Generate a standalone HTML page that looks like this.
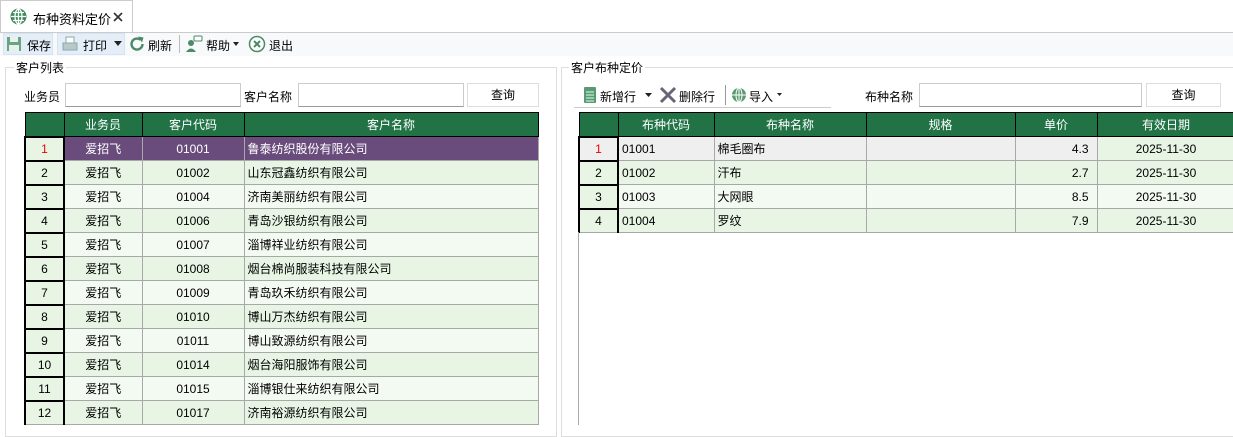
<!DOCTYPE html>
<html><head><meta charset="utf-8"><style>
*{box-sizing:border-box;margin:0;padding:0}
body{width:1233px;height:425px;overflow:hidden;background:#fff;font-family:"Liberation Sans","Noto Sans CJK SC",sans-serif;font-size:12px;color:#000;position:relative}
.a{position:absolute}
.tab{left:0;top:0;width:133px;height:32px;border:1px solid #ccc;border-bottom:none;background:#fff}
.tb{left:0;top:32px;width:1233px;height:24px;background:#f7f9fb;border-top:1px solid #ccc}
.grp{border:1px solid #ddd}
.lbl{background:#fff;padding:0 2px}
.inp{border:1px solid #ccc;border-bottom:1px solid #999;background:#fff}
.btn{border:1px solid #ddd;background:#fff;text-align:center;line-height:22px}
table{border-collapse:collapse;position:absolute;table-layout:fixed}
td,th{height:24px;border:1px solid #a8a8a8;font-weight:normal;white-space:nowrap;overflow:hidden;font-size:12px}
th{background:#217346;color:#fff;border-color:#000;text-align:center}
td.n{background:#e8f5e4;text-align:center;border-left:2px solid #000;border-top:2px solid #000;border-right:2px solid #000}
td.c{text-align:center}
td.r{text-align:right;padding-right:8px}
td.l{padding-left:3px}
tr.o td{background:#f3faf1}
tr.e td{background:#e8f5e4}
tr.s td{background:#6a4c7c;color:#fff}
tr td.n{background:#e8f5e4;color:#000}
tr.g td{background:#efefef}
.red{color:#e00!important}
</style></head><body>
<div class="a" style="left:0;top:0;width:1233px;height:32px;background:#fff"></div>
<div class="a tab"></div>
<svg class="a" style="left:10px;top:8px" width="17" height="17" viewBox="0 0 17 17"><circle cx="8.5" cy="8.5" r="8" fill="#3e8a5a"/><path d="M8.5 1v15M1 8.5h15M3 4.5h11M3 12.5h11" stroke="#fff" stroke-width="1.3" fill="none"/><ellipse cx="8.5" cy="8.5" rx="3.5" ry="7.5" stroke="#fff" stroke-width="1.3" fill="none"/></svg>
<div class="a" style="left:33px;top:9px;font-size:13px">布种资料定价</div>
<svg class="a" style="left:113px;top:12px" width="10" height="10"><path d="M1 1l8 8M9 1l-8 8" stroke="#333" stroke-width="1.6"/></svg>
<div class="a tb"></div>
<div class="a" style="left:3px;top:33px;width:50px;height:22px;background:#e3eef9;border:1px solid #d6e4f2"></div>
<svg class="a" style="left:6px;top:36px" width="16" height="16"><rect x="1" y="1" width="14" height="14" fill="#6aa482"/><rect x="4" y="1" width="8" height="5" fill="#e8f2ec"/><rect x="3" y="9" width="10" height="6" fill="#e8f2ec"/></svg>
<div class="a" style="left:27px;top:37px">保存</div>
<div class="a" style="left:57px;top:33px;width:68px;height:22px;background:#e3eef9;border:1px solid #d6e4f2"></div>
<svg class="a" style="left:62px;top:36px" width="16" height="16"><rect x="4" y="1" width="8" height="6" fill="#fff" stroke="#8aa" /><rect x="1" y="7" width="14" height="7" fill="#b9c9c9" stroke="#8aa"/></svg>
<div class="a" style="left:83px;top:37px">打印</div>
<svg class="a" style="left:114px;top:41px" width="8" height="5"><path d="M0 0h8L4 5z" fill="#222"/></svg>
<svg class="a" style="left:128px;top:35px" width="18" height="18"><path d="M14.5 9A5.5 5.5 0 1 1 12.5 4.8" stroke="#4a8a66" stroke-width="2.4" fill="none"/><path d="M10 1.5l5.5 1-1.5 5z" fill="#4a8a66"/></svg>
<div class="a" style="left:148px;top:37px">刷新</div>
<div class="a" style="left:179px;top:35px;width:1px;height:18px;background:#bbb"></div>
<svg class="a" style="left:185px;top:35px" width="18" height="18"><circle cx="6" cy="8" r="3" fill="#4a8a66"/><path d="M1 17q5-7 10 0z" fill="#4a8a66"/><rect x="9" y="1" width="8" height="5" rx="1" fill="#fff" stroke="#4a8a66"/></svg>
<div class="a" style="left:206px;top:37px">帮助</div>
<svg class="a" style="left:233px;top:42px" width="6" height="4"><path d="M0 0h6L3 4z" fill="#222"/></svg>
<svg class="a" style="left:248px;top:35px" width="18" height="18"><circle cx="9" cy="9" r="7.5" fill="#fff" stroke="#4a8a66" stroke-width="1.5"/><path d="M6 6l6 6M12 6l-6 6" stroke="#4a8a66" stroke-width="2"/></svg>
<div class="a" style="left:269px;top:37px">退出</div>

<!-- left group -->
<div class="a grp" style="left:5px;top:67px;width:552px;height:370px"></div>
<div class="a lbl" style="left:14px;top:59px">客户列表</div>
<div class="a" style="left:24px;top:88px">业务员</div>
<div class="a inp" style="left:65px;top:83px;width:176px;height:24px"></div>
<div class="a" style="left:244px;top:88px">客户名称</div>
<div class="a inp" style="left:298px;top:83px;width:166px;height:24px"></div>
<div class="a btn" style="left:467px;top:83px;width:72px;height:24px">查询</div>
<table style="left:24px;top:112px;width:513px">
<colgroup><col style="width:39px"><col style="width:78px"><col style="width:102px"><col style="width:294px"></colgroup>
<tr><th></th><th>业务员</th><th>客户代码</th><th>客户名称</th></tr>
<tr class="s"><td class="n red">1</td><td class="c">爱招飞</td><td class="c">01001</td><td class="l">鲁泰纺织股份有限公司</td></tr>
<tr class="e"><td class="n">2</td><td class="c">爱招飞</td><td class="c">01002</td><td class="l">山东冠鑫纺织有限公司</td></tr>
<tr class="o"><td class="n">3</td><td class="c">爱招飞</td><td class="c">01004</td><td class="l">济南美丽纺织有限公司</td></tr>
<tr class="e"><td class="n">4</td><td class="c">爱招飞</td><td class="c">01006</td><td class="l">青岛沙银纺织有限公司</td></tr>
<tr class="o"><td class="n">5</td><td class="c">爱招飞</td><td class="c">01007</td><td class="l">淄博祥业纺织有限公司</td></tr>
<tr class="e"><td class="n">6</td><td class="c">爱招飞</td><td class="c">01008</td><td class="l">烟台棉尚服装科技有限公司</td></tr>
<tr class="o"><td class="n">7</td><td class="c">爱招飞</td><td class="c">01009</td><td class="l">青岛玖禾纺织有限公司</td></tr>
<tr class="e"><td class="n">8</td><td class="c">爱招飞</td><td class="c">01010</td><td class="l">博山万杰纺织有限公司</td></tr>
<tr class="o"><td class="n">9</td><td class="c">爱招飞</td><td class="c">01011</td><td class="l">博山致源纺织有限公司</td></tr>
<tr class="e"><td class="n">10</td><td class="c">爱招飞</td><td class="c">01014</td><td class="l">烟台海阳服饰有限公司</td></tr>
<tr class="o"><td class="n">11</td><td class="c">爱招飞</td><td class="c">01015</td><td class="l">淄博银仕来纺织有限公司</td></tr>
<tr class="e"><td class="n">12</td><td class="c">爱招飞</td><td class="c">01017</td><td class="l">济南裕源纺织有限公司</td></tr>
</table>

<!-- right group -->
<div class="a grp" style="left:561px;top:67px;width:680px;height:370px"></div>
<div class="a lbl" style="left:569px;top:59px">客户布种定价</div>
<div class="a" style="left:574px;top:107px;width:257px;height:1px;background:#ccc"></div>
<svg class="a" style="left:583px;top:86px" width="14" height="18"><rect x="1" y="1" width="12" height="16" rx="1" fill="#5a9a72"/><path d="M3 6h8M3 9h8M3 12h8M3 15h8" stroke="#dfe" stroke-width="1"/></svg>
<div class="a" style="left:600px;top:88px">新增行</div>
<svg class="a" style="left:645px;top:93px" width="7" height="4"><path d="M0 0h7L3.5 4z" fill="#222"/></svg>
<svg class="a" style="left:659px;top:86px" width="18" height="18"><path d="M2 2l14 14M16 2L2 16" stroke="#667" stroke-width="3"/></svg>
<div class="a" style="left:679px;top:88px">删除行</div>
<div class="a" style="left:725px;top:85px;width:1px;height:20px;background:#999"></div>
<svg class="a" style="left:731px;top:87px" width="16" height="16"><circle cx="8" cy="8" r="7" fill="#5a9a72"/><path d="M8 1v14M1 8h14" stroke="#fff"/><ellipse cx="8" cy="8" rx="3" ry="7" stroke="#fff" fill="none"/></svg>
<div class="a" style="left:749px;top:88px">导入</div>
<svg class="a" style="left:777px;top:93px" width="5" height="3"><path d="M0 0h5L2.5 3z" fill="#222"/></svg>
<div class="a" style="left:865px;top:88px">布种名称</div>
<div class="a inp" style="left:919px;top:83px;width:223px;height:24px"></div>
<div class="a btn" style="left:1146px;top:83px;width:75px;height:24px">查询</div>
<table style="left:578px;top:112px;width:656px">
<colgroup><col style="width:39px"><col style="width:96px"><col style="width:152px"><col style="width:149px"><col style="width:82px"><col style="width:138px"></colgroup>
<tr><th></th><th>布种代码</th><th>布种名称</th><th>规格</th><th>单价</th><th>有效日期</th></tr>
<tr class="g"><td class="n red">1</td><td class="l">01001</td><td class="l">棉毛圈布</td><td></td><td class="r">4.3</td><td class="c" style="background:#e8f5e4">2025-11-30</td></tr>
<tr class="e"><td class="n">2</td><td class="l">01002</td><td class="l">汗布</td><td></td><td class="r">2.7</td><td class="c">2025-11-30</td></tr>
<tr class="o"><td class="n">3</td><td class="l">01003</td><td class="l">大网眼</td><td></td><td class="r">8.5</td><td class="c">2025-11-30</td></tr>
<tr class="e"><td class="n">4</td><td class="l">01004</td><td class="l">罗纹</td><td></td><td class="r">7.9</td><td class="c">2025-11-30</td></tr>
</table>
<div class="a" style="left:578px;top:232px;width:1px;height:193px;background:#aaa"></div>
</body></html>
